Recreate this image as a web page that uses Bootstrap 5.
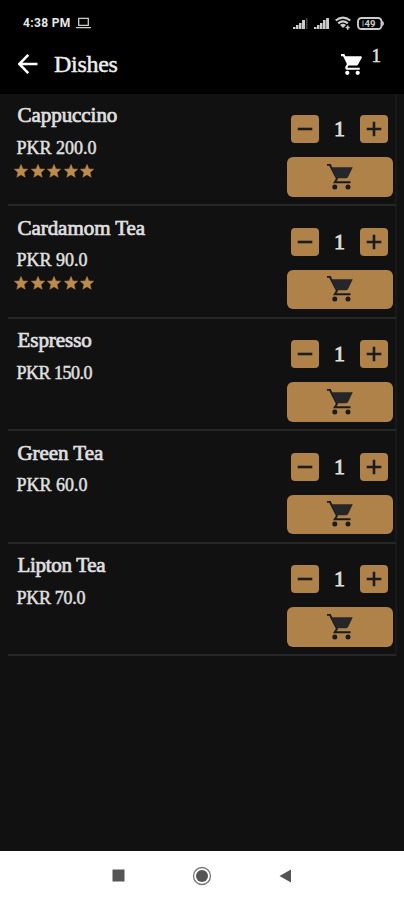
<!DOCTYPE html>
<html lang="en">
<head>
<meta charset="utf-8">
<meta name="viewport" content="width=device-width, initial-scale=1">
<title>Dishes</title>
<link href="https://cdn.jsdelivr.net/npm/bootstrap@5.3.0/dist/css/bootstrap.min.css" rel="stylesheet">
<style>
body{background:#111;color:#e0e0e0;font-family:"Liberation Serif",serif;height:900px;overflow:hidden}
svg{display:block;flex:none}
.top-area{background:#000;height:93.5px}
.status{height:46px;padding:0 20px 0 23px;font:bold 12px/46px Roboto,sans-serif;letter-spacing:.35px;color:#e6e6e6}
.status .icons{gap:6px}
.app-bar{height:36px;padding:0 23px 0 18px}
.page-title{font-size:24px;line-height:36px;letter-spacing:-.3px;margin-left:16px;color:#eee;-webkit-text-stroke:.45px}
.cart-count{font-size:19px;line-height:20px;margin:0 0 16px 7px;-webkit-text-stroke:.5px}
.dishes{padding:0 7px 0 8px}
.dish{height:112.5px;border-bottom:2px solid #272727;border-right:2px solid #191919;padding:0 2px 0 6px}
.dish-name{font-size:21px;line-height:24px;margin:9.5px 0 0 3.5px;letter-spacing:-.05px;-webkit-text-stroke:.7px}
.price{font-size:18px;line-height:22px;margin:9.5px 0 0 2.5px;-webkit-text-stroke:.45px}
.tight{letter-spacing:-.3px}
.tighter{letter-spacing:-.5px}
.stars{gap:2.5px;margin-top:5px}
.controls{width:106px;padding-top:21.5px}
.stepper{padding:0 5px 0 4px}
.tan,.tan:hover{background:#ae8248;border:0;border-radius:4px;color:#1c1c1e}
.step{width:28px;height:28px}
.add{height:39.5px;margin-top:14px;border-radius:6px}
.qty{font-size:22px;line-height:28px;-webkit-text-stroke:.8px}
.sys-nav{background:#fff;height:49px;padding:0 112px 0 112px}
</style>
<script src="https://cdn.jsdelivr.net/npm/bootstrap@5.3.0/dist/js/bootstrap.bundle.min.js"></script>
</head>
<body class="d-flex flex-column m-0">
<svg width="0" height="0" class="position-absolute">
  <symbol id="star" viewBox="0 0 14 14"><path fill="#bd8b4d" stroke="#bd8b4d" stroke-width=".5" d="M7 .4l1.900 4.500 4.800.3-3.700 3.200 1.200 4.800L7 10.700l-4.200 2.500L4 8.400.3 5.200l4.800-.3z"/></symbol>
  <symbol id="cart" viewBox="0 0 26 26"><path d="M0 .9h3l1.200 2.600L10 14.800l-2.300 3.500h15.800" fill="none" stroke="#1b1b1e" stroke-width="1.900"/><path d="M4 3.200h21.800l-4.600 9.600q-.6 1.400-2 1.400H9.800z" fill="#25262a"/><circle cx="7.800" cy="23" r="2.500" fill="#1b1b1e"/><circle cx="21" cy="23" r="2.500" fill="#1b1b1e"/></symbol>
  <symbol id="minus" viewBox="0 0 16 16"><path d="M.7 8h14.600" stroke="#1c1c1e" stroke-width="2.600"/></symbol>
  <symbol id="plus" viewBox="0 0 16 16"><path d="M.7 8h14.600M8 .7v14.600" stroke="#1c1c1e" stroke-width="2.600"/></symbol>
</svg>
<header class="top-area">
  <div class="status d-flex align-items-center">
    <span>4:38 PM</span>
    <svg class="ms-1" width="17" height="12" viewBox="0 0 17 12" fill="none" stroke="#ccc" stroke-width="1.300"><path d="M3.700 1.300h9.600v7H3.700zM1 10.700h15"/></svg>
    <div class="icons d-flex align-items-center ms-auto">
      <svg width="15" height="12" viewBox="0 0 15 12"><path fill="#ccc" d="M0 12v-2h2.500v2zM3 12V8h2.500v4zM6 12V6h2.500v6zM9 12V3h3v9z"/><path fill="#444" d="M13 1h1.500v11H13z"/></svg>
      <svg width="15" height="12" viewBox="0 0 15 12"><path fill="#ccc" d="M0 12v-2h2.500v2zM3 12V8h2.500v4zM6 12V6h2.500v6zM9 12V3h2.600v9zM12.100 1H15v11h-2.900z"/></svg>
      <svg width="16" height="14" viewBox="0 0 16 14" fill="none" stroke="#ccc" stroke-width="2.200"><path d="M.7 4.500Q8-1.300 15.300 4.500M3.200 7.300q4.800-4 9.600 0"/><path d="M5 9q3-2.300 6 0l-3 3z" fill="#ccc" stroke="none"/><path d="M12.700 9.500v4.200M10.700 11.600h4" stroke-width="1.500"/></svg>
      <svg width="27" height="13" viewBox="0 0 27 13"><rect x="1" y="1" width="23.500" height="11" rx="3.500" fill="none" stroke="#ccc" stroke-width="1.900"/><path d="M25.700 4.500q1.500 2 0 4z" fill="#ccc" stroke="#ccc"/><path d="M5 3.500h2v6H5z" fill="#555"/><text x="7.500" y="10" font-family="Roboto,sans-serif" font-size="9.500" font-weight="700" letter-spacing="0" fill="#ccc">49</text></svg>
    </div>
  </div>
  <div class="app-bar d-flex align-items-center">
    <svg width="20" height="20" viewBox="0 0 20 20" fill="none" stroke="#fff" stroke-width="2.500"><path d="M19.500 10H1.500M10.300.8L1.200 10l9.100 9.200"/></svg>
    <h1 class="page-title fw-normal mb-0">Dishes</h1>
    <svg class="ms-auto" width="25" height="25" viewBox="0 0 24 24"><path fill="#fff" d="M7 18c-1.100 0-1.990.9-1.990 2S5.900 22 7 22s2-.9 2-2-.9-2-2-2zM1 2v2h2l3.600 7.590-1.350 2.450c-.16.28-.25.61-.25.960 0 1.100.9 2 2 2h12v-2H7.420c-.14 0-.25-.11-.25-.25l.03-.12.9-1.630h7.450c.75 0 1.410-.41 1.750-1.030l3.580-6.490A1 1 0 0020 4H5.210l-.94-2H1zm16 16c-1.100 0-1.990.9-1.990 2s.89 2 1.990 2 2-.9 2-2-.9-2-2-2z"/></svg>
    <span class="cart-count">1</span>
  </div>
</header>
<main class="dishes flex-grow-1">
  <article class="dish d-flex justify-content-between">
    <div><h2 class="dish-name fw-normal mb-0">Cappuccino</h2><div class="price">PKR 200.0</div>
      <div class="stars d-flex"><svg width="14" height="14"><use href="#star"/></svg><svg width="14" height="14"><use href="#star"/></svg><svg width="14" height="14"><use href="#star"/></svg><svg width="14" height="14"><use href="#star"/></svg><svg width="14" height="14"><use href="#star"/></svg></div></div>
    <div class="controls"><div class="stepper d-flex justify-content-between"><button class="btn tan step p-0 d-flex align-items-center justify-content-center" aria-label="Less"><svg width="16" height="16"><use href="#minus"/></svg></button><span class="qty">1</span><button class="btn tan step p-0 d-flex align-items-center justify-content-center" aria-label="More"><svg width="16" height="16"><use href="#plus"/></svg></button></div>
      <button class="btn tan add w-100 p-0 d-flex align-items-center justify-content-center" aria-label="Add to cart"><svg width="26" height="26"><use href="#cart"/></svg></button></div>
  </article>
  <article class="dish d-flex justify-content-between">
    <div><h2 class="dish-name fw-normal mb-0">Cardamom Tea</h2><div class="price">PKR 90.0</div>
      <div class="stars d-flex"><svg width="14" height="14"><use href="#star"/></svg><svg width="14" height="14"><use href="#star"/></svg><svg width="14" height="14"><use href="#star"/></svg><svg width="14" height="14"><use href="#star"/></svg><svg width="14" height="14"><use href="#star"/></svg></div></div>
    <div class="controls"><div class="stepper d-flex justify-content-between"><button class="btn tan step p-0 d-flex align-items-center justify-content-center" aria-label="Less"><svg width="16" height="16"><use href="#minus"/></svg></button><span class="qty">1</span><button class="btn tan step p-0 d-flex align-items-center justify-content-center" aria-label="More"><svg width="16" height="16"><use href="#plus"/></svg></button></div>
      <button class="btn tan add w-100 p-0 d-flex align-items-center justify-content-center" aria-label="Add to cart"><svg width="26" height="26"><use href="#cart"/></svg></button></div>
  </article>
  <article class="dish d-flex justify-content-between">
    <div><h2 class="dish-name fw-normal mb-0">Espresso</h2><div class="price tighter">PKR 150.0</div></div>
    <div class="controls"><div class="stepper d-flex justify-content-between"><button class="btn tan step p-0 d-flex align-items-center justify-content-center" aria-label="Less"><svg width="16" height="16"><use href="#minus"/></svg></button><span class="qty">1</span><button class="btn tan step p-0 d-flex align-items-center justify-content-center" aria-label="More"><svg width="16" height="16"><use href="#plus"/></svg></button></div>
      <button class="btn tan add w-100 p-0 d-flex align-items-center justify-content-center" aria-label="Add to cart"><svg width="26" height="26"><use href="#cart"/></svg></button></div>
  </article>
  <article class="dish d-flex justify-content-between">
    <div><h2 class="dish-name fw-normal mb-0">Green Tea</h2><div class="price">PKR 60.0</div></div>
    <div class="controls"><div class="stepper d-flex justify-content-between"><button class="btn tan step p-0 d-flex align-items-center justify-content-center" aria-label="Less"><svg width="16" height="16"><use href="#minus"/></svg></button><span class="qty">1</span><button class="btn tan step p-0 d-flex align-items-center justify-content-center" aria-label="More"><svg width="16" height="16"><use href="#plus"/></svg></button></div>
      <button class="btn tan add w-100 p-0 d-flex align-items-center justify-content-center" aria-label="Add to cart"><svg width="26" height="26"><use href="#cart"/></svg></button></div>
  </article>
  <article class="dish d-flex justify-content-between">
    <div><h2 class="dish-name tight fw-normal mb-0">Lipton Tea</h2><div class="price tight">PKR 70.0</div></div>
    <div class="controls"><div class="stepper d-flex justify-content-between"><button class="btn tan step p-0 d-flex align-items-center justify-content-center" aria-label="Less"><svg width="16" height="16"><use href="#minus"/></svg></button><span class="qty">1</span><button class="btn tan step p-0 d-flex align-items-center justify-content-center" aria-label="More"><svg width="16" height="16"><use href="#plus"/></svg></button></div>
      <button class="btn tan add w-100 p-0 d-flex align-items-center justify-content-center" aria-label="Add to cart"><svg width="26" height="26"><use href="#cart"/></svg></button></div>
  </article>
</main>
<footer class="sys-nav d-flex align-items-center justify-content-between">
  <svg width="13" height="13"><rect x=".5" y=".5" width="12" height="12" fill="#555"/></svg>
  <svg width="20" height="20" viewBox="0 0 20 20"><circle cx="10" cy="10" r="8.500" fill="none" stroke="#777" stroke-width="1.300"/><circle cx="10" cy="10" r="6" fill="#555"/></svg>
  <svg width="13" height="14" viewBox="0 0 13 14"><path d="M12 .5v13L.5 7z" fill="#555"/></svg>
</footer>
</body>
</html>
